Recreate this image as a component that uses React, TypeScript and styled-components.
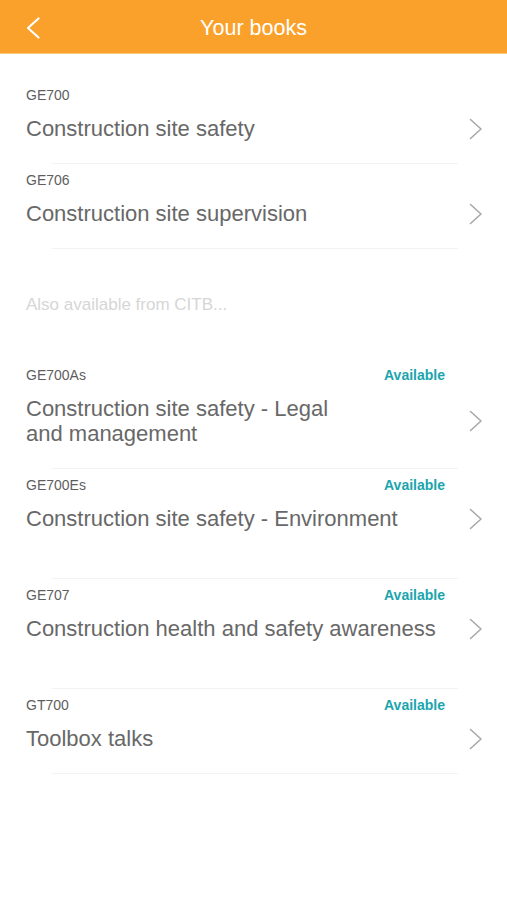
import React from 'react';
import styled, { createGlobalStyle } from 'styled-components';

const GlobalStyle = createGlobalStyle`
  html, body {
    margin: 0;
    padding: 0;
    background: #ffffff;
    font-family: "Liberation Sans", Arial, Helvetica, sans-serif;
  }
`;

const Page = styled.div`
  width: 507px;
  min-height: 900px;
  background: #fff;
  display: flex;
  flex-direction: column;
`;

const NavBar = styled.header`
  height: 53px;
  background: #f9a12b;
  border-bottom: 1px solid #fbc77f;
  display: grid;
  grid-template-columns: 60px 1fr 60px;
  align-items: center;
`;

const BackButton = styled.button`
  border: 0;
  background: none;
  padding: 2px 0 0 25px;
  height: 100%;
  display: flex;
  align-items: center;
  cursor: pointer;
`;

const NavTitle = styled.h1`
  margin: 0;
  padding-top: 3px;
  text-align: center;
  color: #fff;
  font-size: 21.5px;
  font-weight: 400;
  line-height: 26px;
`;

const List = styled.main`
  padding-top: 25px;
  display: flex;
  flex-direction: column;
`;

const Row = styled.a<{ $extra?: boolean }>`
  display: flex;
  flex-direction: column;
  padding: 8px 0 ${(p) => (p.$extra ? 47 : 22)}px 26px;
  text-decoration: none;
  cursor: pointer;
`;

const CodeLine = styled.div`
  display: flex;
  justify-content: space-between;
  align-items: center;
  padding-right: 62px;
  height: 16px;
`;

const Code = styled.span`
  font-size: 14px;
  color: #5e5e5e;
`;

const Badge = styled.span`
  font-size: 14px;
  font-weight: 700;
  color: #1aa5ae;
`;

const TitleLine = styled.div`
  display: flex;
  justify-content: space-between;
  align-items: center;
  margin-top: 13px;
  padding-right: 24px;
`;

const Title = styled.span`
  font-size: 22px;
  line-height: 25px;
  color: #686868;
`;

const Divider = styled.div`
  height: 1px;
  margin: 0 49px 0 52px;
  background: #f3f3f3;
`;

const SectionNote = styled.div`
  padding: 46px 26px 44px;
  font-size: 17px;
  line-height: 20px;
  color: #d6d6d6;
`;

const Chevron = () => (
  <svg width="14" height="22" viewBox="0 0 14 22" fill="none">
    <polyline points="1.5,1.5 12,11 1.5,20.5" stroke="#a8a8a8" strokeWidth="1.6" strokeLinecap="round" strokeLinejoin="round" />
  </svg>
);

const BackIcon = () => (
  <svg width="16" height="22" viewBox="0 0 16 22" fill="none">
    <polyline points="13.5,1.5 3,11 13.5,20.5" stroke="#fff" strokeWidth="2.2" strokeLinecap="round" strokeLinejoin="round" />
  </svg>
);

type Book = { code: string; title: React.ReactNode; available?: boolean; extra?: boolean };

const owned: Book[] = [
  { code: 'GE700', title: 'Construction site safety' },
  { code: 'GE706', title: 'Construction site supervision' },
];

const more: Book[] = [
  { code: 'GE700As', title: <>Construction site safety - Legal<br />and management</>, available: true },
  { code: 'GE700Es', title: 'Construction site safety - Environment', available: true, extra: true },
  { code: 'GE707', title: 'Construction health and safety awareness', available: true, extra: true },
  { code: 'GT700', title: 'Toolbox talks', available: true },
];

function BookRow({ book }: { book: Book }) {
  return (
    <>
      <Row $extra={book.extra}>
        <CodeLine>
          <Code>{book.code}</Code>
          {book.available && <Badge>Available</Badge>}
        </CodeLine>
        <TitleLine>
          <Title>{book.title}</Title>
          <Chevron />
        </TitleLine>
      </Row>
      <Divider />
    </>
  );
}

export default function App() {
  return (
    <Page>
      <GlobalStyle />
      <NavBar>
        <BackButton aria-label="Back">
          <BackIcon />
        </BackButton>
        <NavTitle>Your books</NavTitle>
        <span />
      </NavBar>
      <List>
        {owned.map((b) => (
          <BookRow key={b.code} book={b} />
        ))}
        <SectionNote>Also available from CITB...</SectionNote>
        {more.map((b) => (
          <BookRow key={b.code} book={b} />
        ))}
      </List>
    </Page>
  );
}
